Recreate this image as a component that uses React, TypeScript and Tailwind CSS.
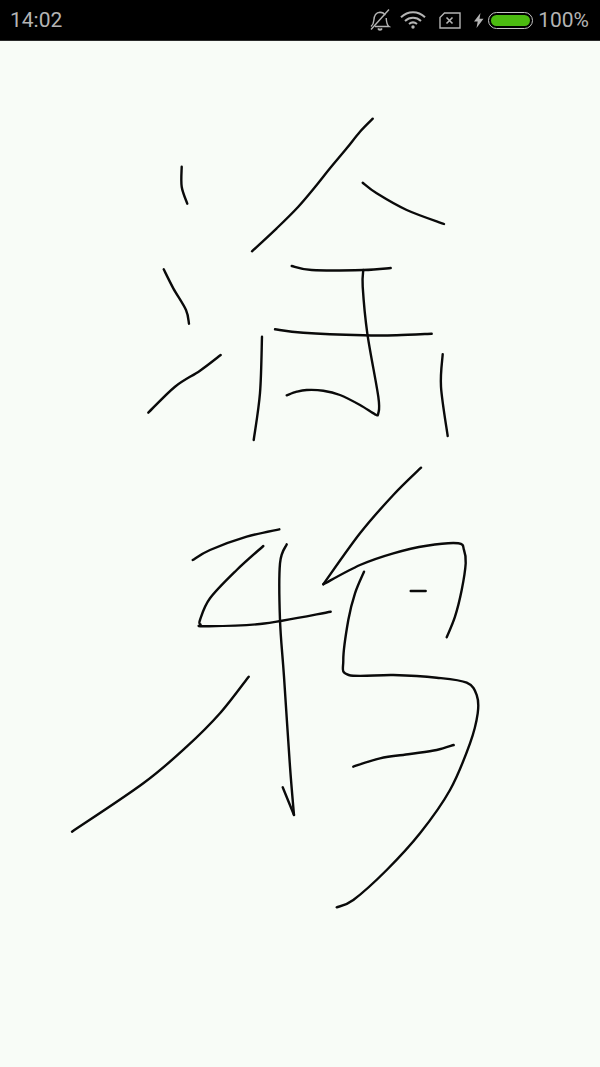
const strokes: [number, number][][] = [
  [[372.7,118.7],[360,131.7],[346.7,148.3],[330,168.3],[316.7,185],[298.3,206.7],[276.7,228.3],[252,251.3]],
  [[362.7,182.7],[376.7,193.3],[406.7,210],[444,224]],
  [[181.7,166.7],[181.7,186.7],[187.3,203.7]],
  [[163.7,269.3],[173.3,288.3],[186,310],[189,323.7]],
  [[220.7,355],[200,370.7],[175,386.7],[148.3,412.7]],
  [[262,336.7],[260,393],[253.7,440]],
  [[291.7,266],[311.7,270],[363.3,270],[390.7,268]],
  [[363.3,270],[362.7,286.7],[367.3,333.3],[378.3,396.7],[378.3,413.3],[375,414.3],[360,405],[340,395],[323.3,390.7],[306.7,390],[296.7,391.7],[286.7,395.3]],
  [[275,329.3],[303.3,332.7],[363.3,335.3],[396.7,335.3],[431.7,333.7]],
  [[442.7,354.3],[441,386.7],[447.7,436]],
  [[421,467.7],[393.3,495],[360,533.3],[323.3,584.3]],
  [[323.3,584.3],[360,565],[393.3,553.3],[426.7,545.7],[458.3,543.3],[464,550],[465.7,563.3],[461.7,590],[455,616.7],[446.7,637.3]],
  [[192.7,560],[210,550],[246.7,536.7],[279.3,529.3]],
  [[263.3,546],[236.7,570],[210,598.3],[200,620],[200.5,624.5],[204,626.2],[260,624],[330.7,611.7]],
  [[286.7,544.3],[280,563.3],[280,620],[284,676.7],[290,766.7],[294,815]],
  [[294,815],[282.7,787.3]],
  [[248.7,676.7],[220,713.3],[186.7,746.7],[143.3,783.3],[72,831.7]],
  [[364,571.7],[355,593.3],[348.3,620],[343.3,660],[348.7,675],[393.3,675],[436.7,677.7],[466.7,682.7],[476.7,695],[477.7,713.3],[470,743.3],[450,790],[420,833.3],[386.7,870],[353.3,900],[336.7,907.3]],
  [[410.7,591],[425.7,591]],
  [[353.3,766.7],[380,758.3],[410,754],[436.7,750],[453.7,745]],
];

function toPath(p: [number, number][]) {
  if (p.length < 3) return "M" + p.map((q) => q.join(" ")).join("L");
  let d = `M${p[0][0]} ${p[0][1]}`;
  for (let i = 0; i < p.length - 1; i++) {
    const a = p[Math.max(0, i - 1)];
    const b = p[i];
    const c = p[i + 1];
    const e = p[Math.min(p.length - 1, i + 2)];
    const k = 1 / 6;
    d += `C${b[0] + (c[0] - a[0]) * k} ${b[1] + (c[1] - a[1]) * k} ${c[0] - (e[0] - b[0]) * k} ${c[1] - (e[1] - b[1]) * k} ${c[0]} ${c[1]}`;
  }
  return d;
}

export default function App() {
  return (
    <div className="flex h-[1067px] w-[600px] flex-col overflow-hidden bg-[#f8fcf7]">
      <header className="flex h-[41px] shrink-0 items-center justify-between border-b border-[#2a2a2a] bg-black pl-[10px] pr-[11px] text-[21px] leading-none text-[#b4b4b4] [font-family:Roboto,sans-serif]">
        <span>14:02</span>
        <div className="flex items-center">
          <svg width="22" height="24" viewBox="0 0 22 24" fill="none" stroke="#b4b4b4" strokeWidth="1.4" className="mr-[9px]">
            <path d="M2 18.5c2-1.5 2.6-3 2.8-6C5 8 6.8 4.500 11 4.200c2.500 0 4.200 1 5.200 3M17.200 10c.2 4 .6 7 2.800 8.500H6" />
            <path d="M2 21.500 20 1.500" />
            <path d="M9 20.500c.4 2 3.600 2 4 0" fill="#b4b4b4" />
          </svg>
          <svg width="26" height="18" viewBox="0 0 26 18" fill="none" stroke="#b4b4b4" strokeWidth="2" className="mr-[13px]">
            <path d="M1 6.200C8 -.4 18 -.4 25 6.200" />
            <path d="M5 10c4.700-4.300 11.300-4.300 16 0" />
            <path d="M9 13c2.500-2 5.500-2 8 0" />
            <circle cx="13" cy="16" r="1.700" fill="#b4b4b4" stroke="none" />
          </svg>
          <svg width="22" height="17" viewBox="0 0 22 17" fill="none" stroke="#b4b4b4" strokeWidth="1.4" className="mr-[13px]">
            <path d="M5.500 1H21v15H1V5.500Z" />
            <path d="M7.500 5.500l6 6M13.500 5.500l-6 6" strokeWidth="1.600" />
          </svg>
          <svg width="10" height="15" viewBox="0 0 10 15" className="mr-[4px]">
            <path d="M6.500 0 0 8.500h3.700L2.500 15 9.500 5.700H5.500Z" fill="#b4b4b4" />
          </svg>
          <div className="mr-[5px] flex h-[17px] w-[45px] items-center rounded-[9px] border border-[#c4c4c4] p-[2px]">
            <div className="h-full w-full rounded-[6px] bg-[#4bbb10]" />
          </div>
          <span>100%</span>
        </div>
      </header>
      <main className="min-h-0 flex-1">
        <svg viewBox="0 41 600 1026" className="block h-full w-full" fill="none" stroke="#0a0a0a" strokeWidth="2.4" strokeLinecap="round" strokeLinejoin="round">
          {strokes.map((s, i) => (
            <path key={i} d={toPath(s)} />
          ))}
        </svg>
      </main>
    </div>
  );
}
